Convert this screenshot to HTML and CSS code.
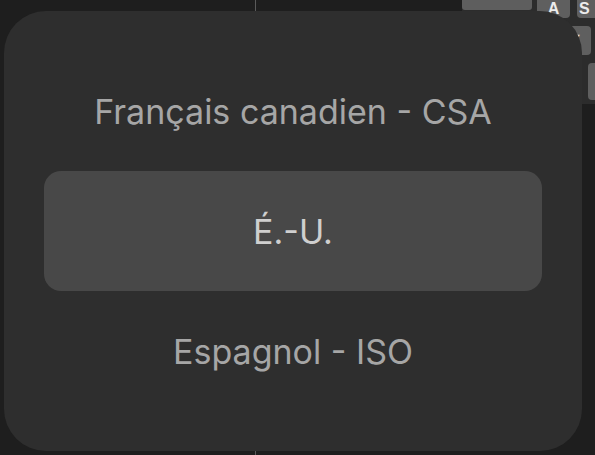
FILE: index.html
```html
<!DOCTYPE html>
<html lang="fr">
<head>
<meta charset="utf-8">
<title>Disposition</title>
<link rel="stylesheet" href="styles.css">
</head>
<body>
<div class="desk">
  <div class="divider"></div>
  <div class="keyboard">
    <div class="kb-bar"></div>
    <div class="key key-a">A</div>
    <div class="key key-s">S</div>
    <div class="key key-down">▼</div>
    <div class="key key-r3"></div>
  </div>
  <div class="menu">
    <div class="item">Français canadien - CSA</div>
    <div class="item selected">É.-U.</div>
    <div class="item">Espagnol - ISO</div>
  </div>
</div>
</body>
</html>
```
FILE: styles.css
```css
html, body {
  margin: 0;
  padding: 0;
  background: #1e1e1e;
}
.desk {
  position: relative;
  width: 595px;
  height: 455px;
  overflow: hidden;
  background: #1e1e1e;
  font-family: Inter, "Noto Sans", sans-serif;
}
.divider {
  position: absolute;
  left: 255px;
  top: 0;
  width: 1px;
  height: 455px;
  background: #5a5a5a;
}
.keyboard {
  position: absolute;
  left: 462px;
  top: 0;
  width: 133px;
  height: 104px;
  background: #2c2c2c;
}
.kb-bar {
  position: absolute;
  left: 0;
  top: 0;
  width: 70px;
  height: 10px;
  background: #5e5e5e;
  border-radius: 0 0 3px 3px;
}
.key {
  position: absolute;
  background: #5f5f5f;
  border-radius: 4px;
  color: #ececec;
  font-family: "Liberation Sans", sans-serif;
  font-weight: bold;
  font-size: 16px;
  text-align: center;
}
.key-a { left: 75px; top: 0; width: 33px; height: 18px; line-height: 17px; border-radius: 0 0 4px 4px; }
.key-s { left: 115px; top: 0; width: 18px; height: 18px; line-height: 17px; text-align: left; padding-left: 2px; border-radius: 0 0 0 4px; }
.key-down { left: 100px; top: 26px; width: 29px; height: 29px; font-size: 11px; line-height: 22px; }
.key-r3 { left: 126px; top: 63px; width: 20px; height: 37px; }
.menu {
  position: absolute;
  left: 4px;
  top: 11px;
  width: 578px;
  height: 440px;
  box-sizing: border-box;
  padding: 40px;
  background: #2e2e2e;
  border-radius: 42px;
  display: flex;
  flex-direction: column;
}
.item {
  height: 120px;
  display: flex;
  align-items: center;
  justify-content: center;
  font-size: 34px;
  color: #a6a6a6;
  border-radius: 17px;
}
.item.selected {
  background: #484848;
  color: #cfcfcf;
}
```
